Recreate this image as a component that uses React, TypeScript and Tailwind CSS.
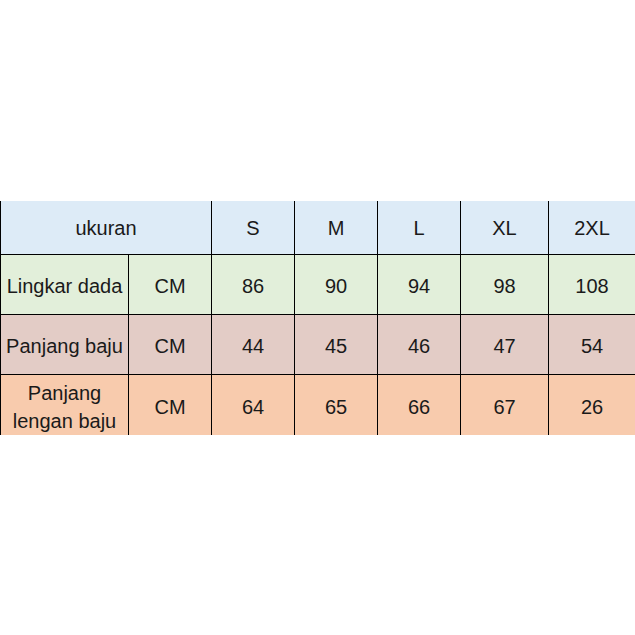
const sizes = ["S", "M", "L", "XL", "2XL"];

const rows = [
  { label: ["Lingkar dada"], bg: "bg-[#e2efda]", values: ["86", "90", "94", "98", "108"] },
  { label: ["Panjang baju"], bg: "bg-[#e3ccc6]", values: ["44", "45", "46", "47", "54"] },
  { label: ["Panjang", "lengan baju"], bg: "bg-[#f8cbad]", values: ["64", "65", "66", "67", "26"] },
];

export default function App() {
  return (
    <div className="w-[635px] h-[635px] bg-white flex items-center font-['Liberation_Sans',Arial,sans-serif] text-[20px] text-[#1a1a1a]">
      <div className="grid w-full grid-cols-[128px_83px_83px_83px_83px_88px_87px] grid-rows-[54px_60px_60px_60px]">
        <div className="col-span-2 bg-[#ddebf7] border-l border-b border-black flex items-center justify-center pt-[2px]">
          ukuran
        </div>
        {sizes.map((s) => (
          <div key={s} className="bg-[#ddebf7] border-l border-b border-black flex items-center justify-center pt-[2px]">
            {s}
          </div>
        ))}
        {rows.map((r, i) => {
          const last = i === rows.length - 1;
          const edge = last ? "border-l border-black" : "border-l border-b border-black";
          return (
            <div key={i} className="contents">
              <div className={`${r.bg} ${edge} flex flex-col items-center justify-center leading-[28px] pt-[4px]`}>
                {r.label.map((t) => (
                  <span key={t}>{t}</span>
                ))}
              </div>
              <div className={`${r.bg} ${edge} flex items-center justify-center pt-[4px]`}>CM</div>
              {r.values.map((v, j) => (
                <div key={j} className={`${r.bg} ${edge} flex items-center justify-center pt-[4px]`}>
                  {v}
                </div>
              ))}
            </div>
          );
        })}
      </div>
    </div>
  );
}
